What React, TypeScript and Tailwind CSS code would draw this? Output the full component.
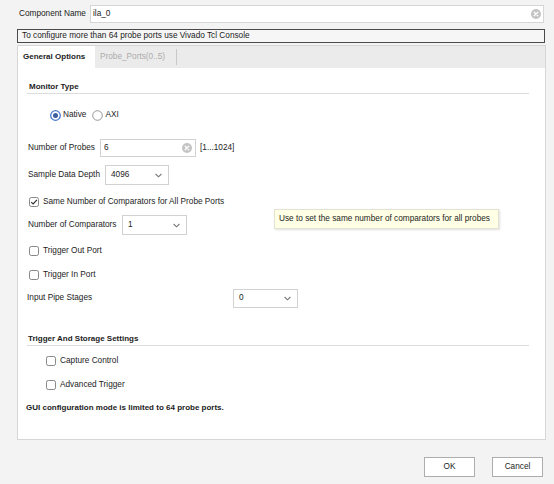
import React from 'react';

// ============================================
// ILA 配置对话框 - General Options 页
// ============================================

function ClearIcon() {
  return (
    <svg width="10" height="10" viewBox="0 0 10 10" className="shrink-0">
      <circle cx="5" cy="5" r="5" fill="#c4c4c4" />
      <path d="M3.2 3.2 L6.8 6.8 M6.8 3.2 L3.2 6.8" stroke="#fff" strokeWidth="1.3" strokeLinecap="round" />
    </svg>
  );
}

function Chevron() {
  return (
    <svg width="7" height="5" viewBox="0 0 7 5" className="shrink-0">
      <path d="M0.6 1 L3.5 3.8 L6.4 1" fill="none" stroke="#777" strokeWidth="1.1" />
    </svg>
  );
}

function Radio({ checked }: { checked?: boolean }) {
  return (
    <svg width="11" height="11" viewBox="0 0 11 11" className="shrink-0">
      {checked ? (
        <>
          <circle cx="5.5" cy="5.5" r="4.8" fill="#fff" stroke="#4b7bd0" strokeWidth="1.3" />
          <circle cx="5.5" cy="5.5" r="2.5" fill="#3d5f9e" />
        </>
      ) : (
        <circle cx="5.5" cy="5.5" r="4.8" fill="#fff" stroke="#8a8a8a" strokeWidth="0.9" />
      )}
    </svg>
  );
}

function Check({ checked }: { checked?: boolean }) {
  return (
    <svg width="10" height="10" viewBox="0 0 10 10" className="shrink-0">
      <rect x="0.5" y="0.5" width="9" height="9" rx="1.8" fill="#fff" stroke="#7a7a7a" strokeWidth="0.9" />
      {checked && <path d="M2.2 5.1 L4.2 7 L7.9 2.8" fill="none" stroke="#333" strokeWidth="1.2" />}
    </svg>
  );
}

function Select({ value, width }: { value: string; width: string }) {
  return (
    <div className={`${width} h-full flex items-center justify-between bg-white border border-[#d2d2d2] pl-[5px] pr-[6px]`}>
      <span>{value}</span>
      <Chevron />
    </div>
  );
}

function CheckRow({ label, checked, indent }: { label: string; checked?: boolean; indent?: boolean }) {
  return (
    <div className={`h-[14px] flex items-center gap-[4px] ${indent ? 'ml-[19px]' : 'ml-[2px]'}`}>
      <Check checked={checked} />
      <span>{label}</span>
    </div>
  );
}

export default function App() {
  return (
    <div
      className="w-[554px] h-[484px] bg-[#f3f3f3] text-[#1c1c1c] text-[8.25px] leading-none overflow-hidden relative"
      style={{ fontFamily: '"Liberation Sans", Arial, sans-serif' }}
    >
      {/* 组件名 */}
      <div className="flex items-center h-[18px] mt-[5px]">
        <span className="ml-[19px] w-[71px]">Component Name</span>
        <div className="w-[454px] h-full bg-white border border-[#d6d6d6] flex items-center justify-between pl-[2px] pr-[2px]">
          <span>ila_0</span>
          <ClearIcon />
        </div>
      </div>

      {/* 提示条 */}
      <div className="ml-[17px] mt-[6px] w-[528px] h-[14px] border border-[#4a4a4a] bg-[#f6f6f6] flex items-center pl-[4px]">
        To configure more than 64 probe ports use Vivado Tcl Console
      </div>

      {/* 选项卡面板 */}
      <div className="ml-[17px] mt-[2px] w-[529px] h-[395px] border border-[#d6d6d6] bg-white flex flex-col">
        <div className="h-[22px] bg-[#ebebeb] flex items-stretch shrink-0">
          <div className="w-[77px] bg-white flex items-center pl-[5px] font-bold text-[8px]">General Options</div>
          <div className="flex items-center pl-[5px] w-[81px] text-[#ababab]">Probe_Ports(0..5)</div>
          <div className="w-px bg-[#c8c8c8] my-[3px]" />
        </div>

        <div className="relative flex flex-col pl-[9px] pr-[16px]">
          {/* Monitor Type */}
          <div className="mt-[12px] h-[14px] border-b border-[#dcdcdc] flex items-center pl-[2px] font-bold text-[8px]">
            Monitor Type
          </div>

          <div className="mt-[14px] h-[14px] flex items-center ml-[23px]">
            <Radio checked />
            <span className="ml-[2px]">Native</span>
            <span className="ml-[6px]" />
            <Radio />
            <span className="ml-[2px]">AXI</span>
          </div>

          <div className="mt-[17px] h-[18px] flex items-center ml-[1px]">
            <span className="w-[72px]">Number of Probes</span>
            <div className="w-[96px] h-full bg-white border border-[#d2d2d2] flex items-center justify-between pl-[3px] pr-[3px]">
              <span>6</span>
              <ClearIcon />
            </div>
            <span className="ml-[4px]">[1...1024]</span>
          </div>

          <div className="mt-[8px] h-[20px] flex items-center ml-[1px]">
            <span className="w-[77px]">Sample Data Depth</span>
            <Select value="4096" width="w-[64px]" />
          </div>

          <div className="mt-[10px]">
            <CheckRow label="Same Number of Comparators for All Probe Ports" checked />
          </div>

          <div className="mt-[6px] h-[20px] flex items-center ml-[1px]">
            <span className="w-[94px]">Number of Comparators</span>
            <Select value="1" width="w-[65px]" />
          </div>

          <div className="mt-[9px]">
            <CheckRow label="Trigger Out Port" />
          </div>
          <div className="mt-[10px]">
            <CheckRow label="Trigger In Port" />
          </div>

          <div className="mt-[7px] h-[19px] flex items-center">
            <span className="w-[206px]">Input Pipe Stages</span>
            <Select value="0" width="w-[65px]" />
          </div>

          {/* Trigger And Storage Settings */}
          <div className="mt-[25px] h-[13px] border-b border-[#dcdcdc] flex items-center pl-[1px] font-bold text-[8px]">
            Trigger And Storage Settings
          </div>

          <div className="mt-[8px]">
            <CheckRow label="Capture Control" indent />
          </div>
          <div className="mt-[10px]">
            <CheckRow label="Advanced Trigger" indent />
          </div>

          <div className="mt-[9px] h-[14px] flex items-center font-bold text-[8px] -ml-[1px]">
            GUI configuration mode is limited to 64 probe ports.
          </div>

          {/* 提示气泡 */}
          <div className="absolute left-[256px] top-[141px] w-[225px] h-[20px] bg-[#ffffe6] border border-[#e2e2d2] shadow-[1px_1px_2px_rgba(0,0,0,0.12)] flex items-center pl-[4px]">
            Use to set the same number of comparators for all probes
          </div>
        </div>
      </div>

      {/* 按钮 */}
      <div className="flex justify-end gap-[17px] mt-[17px] pr-[11px]">
        <button className="w-[51px] h-[20px] bg-white border border-[#adadad] text-[8.25px]">OK</button>
        <button className="w-[51px] h-[20px] bg-white border border-[#adadad] text-[8.25px]">Cancel</button>
      </div>
    </div>
  );
}
